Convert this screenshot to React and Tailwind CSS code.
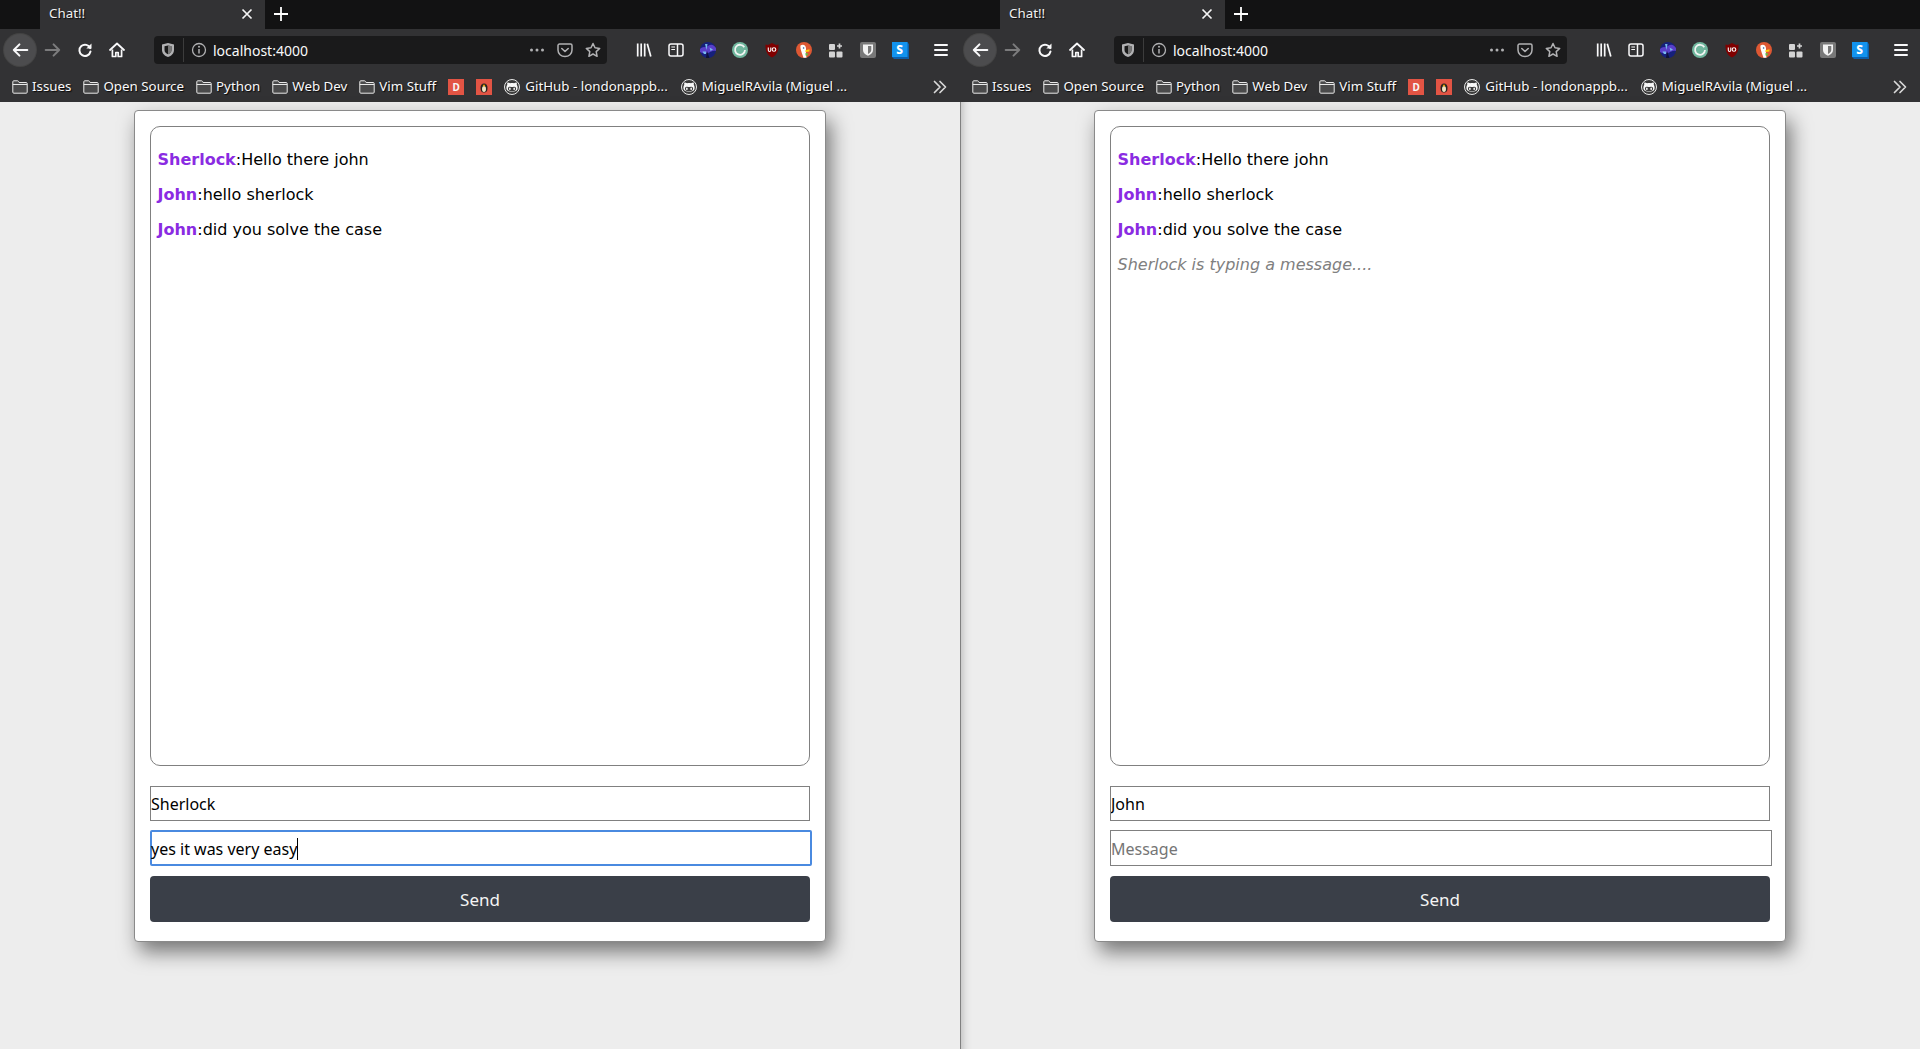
import React from "react";
import { FaGithubAlt } from "react-icons/fa";

const ui = "font-['Noto_Sans',sans-serif]";
const shadow = "[text-shadow:1px_1px_1px_rgba(0,0,0,0.85)]";

const S = ({ children, size = 16, vb = "0 0 16 16", className = "" }) => (
  <svg width={size} height={size} viewBox={vb} fill="none" className={className}>{children}</svg>
);

const Back = () => (
  <S size={18}><path d="M14.5 8H2.5M7.5 3 2.5 8l5 5" stroke="#f9f9fa" strokeWidth="1.8" strokeLinecap="round" strokeLinejoin="round" /></S>
);
const Forward = () => (
  <S size={18}><path d="M1.5 8h12M8.5 3l5 5-5 5" stroke="#7c7c7d" strokeWidth="1.8" strokeLinecap="round" strokeLinejoin="round" /></S>
);
const Reload = () => (
  <S><path d="M13.2 6.2A5.6 5.6 0 1 0 13.5 9.5" stroke="#f9f9fa" strokeWidth="2" strokeLinecap="round" /><path d="M9.3 6.6h5.2V1.4z" fill="#f9f9fa" /></S>
);
const Home = () => (
  <S><path d="M1 8 8 1.5 15 8" stroke="#f9f9fa" strokeWidth="1.8" strokeLinecap="round" strokeLinejoin="round" /><path d="M3.4 7.5v7h3.4v-4h2.4v4h3.4v-7" stroke="#f9f9fa" strokeWidth="1.7" strokeLinejoin="round" /></S>
);
const Shield = () => (
  <S><path d="M2 2.6 8 1l6 1.6V8c0 3.4-2.5 5.8-6 7-3.5-1.2-6-3.6-6-7z" fill="#b1b1b3" /><path d="M4.5 4.3 8 3.5l3.5.8V8c0 2-1.4 3.4-3.5 4.3C5.9 11.4 4.5 10 4.5 8z" fill="#1a1a1a" /><path d="M8 3.5 11.5 4.3V8c0 2-1.4 3.4-3.5 4.3z" fill="#777" /></S>
);
const Info = () => (
  <S><circle cx="8" cy="8" r="6.5" stroke="#b1b1b3" strokeWidth="1.3" /><path d="M8 7v4.5" stroke="#b1b1b3" strokeWidth="1.5" /><circle cx="8" cy="4.7" r="1" fill="#b1b1b3" /></S>
);
const Dots = () => (
  <S><circle cx="2.5" cy="8" r="1.5" fill="#b1b1b3" /><circle cx="8" cy="8" r="1.5" fill="#b1b1b3" /><circle cx="13.5" cy="8" r="1.5" fill="#b1b1b3" /></S>
);
const Pocket = () => (
  <S><path d="M1 3.5C1 2.7 1.7 2 2.5 2h11c.8 0 1.5.7 1.5 1.5V8c0 3.9-3.1 6.500-7 6.500S1 11.900 1 8z" stroke="#b1b1b3" strokeWidth="1.5" /><path d="m4.800 6.500 3.200 3 3.200-3" stroke="#b1b1b3" strokeWidth="1.6" strokeLinecap="round" strokeLinejoin="round" /></S>
);
const Star = () => (
  <S><path d="m8 1.500 2 4.300 4.700.6-3.500 3.200.9 4.700L8 12l-4.100 2.300.9-4.700L1.300 6.400 6 5.800z" stroke="#b1b1b3" strokeWidth="1.5" strokeLinejoin="round" /></S>
);
const Library = () => (
  <S><path d="M1.700 1.500v13M5.200 1.500v13M8.700 1.500v13" stroke="#f9f9fa" strokeWidth="1.7" /><path d="m11.300 1.700 3.500 12.800" stroke="#f9f9fa" strokeWidth="1.7" /></S>
);
const Sidebar = () => (
  <S><rect x="1" y="2" width="14" height="12" rx="2" stroke="#f9f9fa" strokeWidth="1.5" /><path d="M9.500 2v12" stroke="#f9f9fa" strokeWidth="1.5" /><path d="M3.300 5h3.700M3.300 7.500h3.700" stroke="#f9f9fa" strokeWidth="1.2" /></S>
);
const Avatar = () => (
  <S><circle cx="8" cy="8" r="8" fill="#16207a" /><path d="M0 7c3-3 5-1 8-3s5-2 8 2v3c-3-1-5 1-8 2s-6 0-8-1z" fill="#5a3fc8" /><path d="M5 2h2.500l-1 6zM9.500 5.500l3.500 2-2.500 1.500zM2.500 9.500h3.500v2.500H4z" fill="#78b8ec" /><path d="M7 9 9.500 16H6z" fill="#0e1238" /></S>
);
const Grammarly = () => (
  <S><circle cx="8" cy="8" r="8" fill="#6fb69d" /><path d="M12.300 5.200A5 5 0 1 0 13 8" stroke="#f1f5f3" strokeWidth="1.8" /></S>
);
const UBlock = () => (
  <svg width="16" height="16" viewBox="0 0 16 16">
    <path d="M1.500 2.500 4 3l4-2 4 2 2.500-.5c.3 6.500-1.700 10.700-6.500 13C3.200 13.200 1.200 9 1.500 2.500z" fill="#800000" />
    <path d="M4.300 5.500v2.800c0 1.500 2.500 1.500 2.500 0V5.500" stroke="#fff" strokeWidth="1.1" fill="none" />
    <circle cx="10" cy="7.500" r="1.800" stroke="#fff" strokeWidth="1.1" fill="none" />
  </svg>
);
const Duck = () => (
  <S><circle cx="8" cy="8" r="8" fill="#de5833" /><path d="M4.500 3.500C7 1.800 10 3 10 6.500c0 2-.3 4 .5 9.300H7.500C6.700 12.500 3.800 7 4.500 3.500z" fill="#fff" /><circle cx="7.600" cy="6" r=".8" fill="#2d4f8e" /><path d="m9.500 8.300 4-1-.2 2.200-3.800.5z" fill="#fdd20a" /><path d="M9.500 11l2.500.5-.5 2-2 0z" fill="#65bc46" /></S>
);
const Grid = () => (
  <S><rect x="1" y="2" width="6" height="6" rx="1" fill="#d4d4d4" /><rect x="1" y="9.500" width="6" height="6" rx="1" fill="#d4d4d4" /><rect x="8.500" y="9.500" width="6" height="6" rx="1" fill="#d4d4d4" /><path d="M11.500 1.500v5M9 4h5" stroke="#d4d4d4" strokeWidth="1.7" /></S>
);
const Bitwarden = () => (
  <S><rect width="16" height="16" rx="2" fill="#787878" /><path d="M3 2.500h10V8c0 2.800-2.200 4.700-5 5.800C5.200 12.700 3 10.800 3 8z" fill="#f2f2f2" /><path d="M8 4v8c1.800-.9 3.300-2.200 3.300-4V4z" fill="#787878" /></S>
);
const Stylus = () => (
  <svg width="17" height="17" viewBox="0 0 17 17">
    <path d="M0 0h15l2 2v15H2l-2-2z" fill="#0d5ea8" />
    <rect width="15.500" height="15" fill="#1293ee" />
    <text x="7.700" y="12" fontSize="12" fontWeight="800" fill="#fff" textAnchor="middle" fontFamily="'Noto Sans',sans-serif">S</text>
  </svg>
);
const Burger = () => (
  <S><path d="M2 3h12M2 8h12M2 13h12" stroke="#f9f9fa" strokeWidth="2" strokeLinecap="round" /></S>
);
const Chevrons = () => (
  <S><path d="m2.500 2.500 5.500 5.500-5.500 5.500M8 2.500l5.500 5.500L8 13.500" stroke="#d8d8d8" strokeWidth="1.7" strokeLinecap="round" strokeLinejoin="round" /></S>
);
const Folder = () => (
  <S><path d="M.8 4V2.800c0-.6.4-1 1-1h3.700c.5 0 .8.200 1 .6l.6 1.100h7.100c.6 0 1 .4 1 1v8.700c0 .6-.4 1-1 1H1.800c-.6 0-1-.4-1-1z" fill="#4a4a4b" stroke="#e8e8e8" strokeWidth="1" /><path d="M.8 5.500h14.400" stroke="#e8e8e8" strokeWidth="1" /></S>
);
const GitHubIcon = () => (
  <span className="flex h-4 w-4 items-center justify-center rounded-full border border-[#e8e8e8] bg-[#3a3a3a]">
    <FaGithubAlt className="h-3 w-3 text-[#f8f8f8]" />
  </span>
);

const Slot = ({ children, className = "" }) => (
  <div className={`flex h-8 w-8 shrink-0 items-center justify-center ${className}`}>{children}</div>
);

const Bookmark = ({ icon, label, className = "" }) => (
  <div className={`flex shrink-0 items-center ${className}`}>
    {icon}
    <span className={`whitespace-nowrap text-[13.33px] text-[#f9f9fa] ${shadow}`}>{label}</span>
  </div>
);

const Browser = () => (
  <div className={`${ui} shrink-0`}>
    <div className="flex h-[29px] bg-[#121213]">
      <div className="ml-10 flex w-[225px] items-center justify-between bg-[#323234] pb-[1px] pl-[9px] pr-[12px]">
        <span className={`text-[13.33px] text-[#f0f0f0] ${shadow}`}>Chat!!</span>
        <svg width="12" height="12" viewBox="0 0 12 12"><path d="m1.500 1.500 9 9M10.500 1.500l-9 9" stroke="#f4f4f4" strokeWidth="1.7" /></svg>
      </div>
      <div className="flex w-8 items-center justify-center pb-[2px]">
        <svg width="14" height="14" viewBox="0 0 14 14"><path d="M7 0v14M0 7h14" stroke="#fff" strokeWidth="1.8" /></svg>
      </div>
    </div>
    <div className="flex h-[42px] items-center bg-[#323234] pl-1">
      <Slot className="rounded-full bg-[#4c4c4e] ring-1 ring-[#444]"><Back /></Slot>
      <Slot className="ml-[1px]"><Forward /></Slot>
      <Slot><Reload /></Slot>
      <Slot><Home /></Slot>
      <div className="ml-[21px] flex h-7 w-[453px] items-center rounded-[4px] bg-[#1a1a1b] pl-[6px] pr-[6px]">
        <Shield />
        <div className="mx-[7px] h-[24px] w-px bg-[#3c3c3c]" />
        <Info />
        <span className="ml-[6px] text-[14px] text-[#f9f9fa]">localhost:4000</span>
        <div className="ml-auto flex items-center gap-3">
          <Dots />
          <Pocket />
          <Star />
        </div>
      </div>
      <div className="ml-[21px] flex items-center">
        <Slot><Library /></Slot>
        <Slot><Sidebar /></Slot>
        <Slot><Avatar /></Slot>
        <Slot><Grammarly /></Slot>
        <Slot><UBlock /></Slot>
        <Slot><Duck /></Slot>
        <Slot><Grid /></Slot>
        <Slot><Bitwarden /></Slot>
        <Slot><Stylus /></Slot>
        <Slot className="ml-[9px]"><Burger /></Slot>
      </div>
    </div>
    <div className="flex h-[31px] items-center bg-[#323234] pl-3 pr-3 pt-[1px]">
      <Bookmark className="gap-1" icon={<Folder />} label="Issues" />
      <Bookmark className="ml-3 gap-1" icon={<Folder />} label="Open Source" />
      <Bookmark className="ml-3 gap-1" icon={<Folder />} label="Python" />
      <Bookmark className="ml-3 gap-1" icon={<Folder />} label="Web Dev" />
      <Bookmark className="ml-3 gap-1" icon={<Folder />} label="Vim Stuff" />
      <div className="ml-3 flex h-4 w-4 shrink-0 items-center justify-center bg-[#e25444] text-[10px] font-bold text-[#f7f7f7]">D</div>
      <div className="ml-3 flex h-4 w-4 shrink-0 items-center justify-center bg-[#e25444]">
        <svg width="10" height="11" viewBox="0 0 10 11"><ellipse cx="5" cy="6" rx="3.500" ry="4.500" fill="#222" /><ellipse cx="5" cy="7" rx="2" ry="3" fill="#f2e2c0" /><path d="M3.500 2.800h3L5 5z" fill="#f0a500" /></svg>
      </div>
      <Bookmark className="ml-3 gap-[5px]" icon={<GitHubIcon />} label="GitHub - londonappb..." />
      <Bookmark className="ml-[13px] gap-[5px]" icon={<GitHubIcon />} label="MiguelRAvila (Miguel ..." />
      <div className="ml-auto flex w-4 justify-center"><Chevrons /></div>
    </div>
  </div>
);

const messages = [
  ["Sherlock", "Hello there john"],
  ["John", "hello sherlock"],
  ["John", "did you solve the case"],
];

const Pane = ({ name, typing, draft, className = "" }) => (
  <div className={`flex h-full w-[960px] shrink-0 flex-col bg-[#ededed] ${className}`}>
    <Browser />
    <div className="min-h-0 flex-1 pl-[134px] pt-[8px]">
      <div className="flex h-[832px] w-[692px] flex-col items-start rounded-[4px] border border-[#8a8a8a] bg-white px-[15px] pb-[19px] pt-[15px] shadow-[5px_10px_20px_rgba(0,0,0,0.5)]">
        <div className="h-[640px] w-[660px] rounded-[10px] border border-[#808080] bg-white px-[6.5px] pt-[15px] font-['DejaVu_Sans',sans-serif] text-[16px] leading-[35px] text-black">
          {messages.map(([who, text], i) => (
            <div key={i} className="h-[35px] whitespace-nowrap">
              <b className="font-bold text-[#8a2be2]">{who}</b>:{text}
            </div>
          ))}
          {typing && <div className="h-[35px] italic text-[#808080]">{typing}</div>}
        </div>
        <input
          readOnly
          value={name}
          className={`${ui} mt-5 h-[35px] w-[660px] rounded-none border border-[#808080] bg-white px-0 text-[16px] text-black outline-none`}
        />
        {draft ? (
          <div className={`${ui} mt-[9px] flex h-[36px] w-[662px] items-center rounded-[2px] border-2 border-[#4a8ae0] bg-white pt-[1px] text-[16px] text-black`}>
            <span className="-ml-px whitespace-pre">{draft}</span>
            <span className="h-[22px] w-px bg-black" />
          </div>
        ) : (
          <input
            readOnly
            placeholder="Message"
            className={`${ui} mt-[9px] h-[36px] w-[662px] rounded-none border border-[#808080] bg-white px-0 pt-[1px] text-[16px] text-black outline-none placeholder:text-[#757575]`}
          />
        )}
        <button className={`${ui} mt-[10px] h-[46px] w-[660px] rounded-[4px] bg-[#3a3f48] pt-[1px] text-[17px] text-[#f4f4f4]`}>
          Send
        </button>
      </div>
    </div>
  </div>
);

export default function App() {
  return (
    <div className="flex h-screen w-screen overflow-hidden bg-[#ededed]">
      <Pane name="Sherlock" draft="yes it was very easy" />
      <Pane name="John" typing="Sherlock is typing a message...." className="relative shadow-[inset_1px_0_0_#808080,inset_12px_0_10px_-10px_rgba(0,0,0,0.25)]" />
    </div>
  );
}
